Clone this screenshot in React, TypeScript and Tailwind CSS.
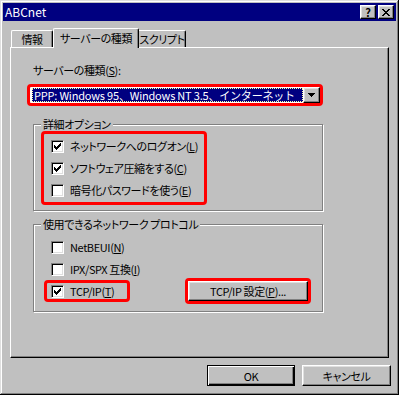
import React from "react";

const FONT = "font-['Noto_Sans_CJK_JP','Noto_Sans_CJK_SC',sans-serif] [font-feature-settings:'palt']";
const TXT = "text-[11px] leading-[14px] tracking-[-0.4px] text-black";

function CheckBox({ checked }: { checked?: boolean }) {
  // 7x7 win95 check glyph, one 3px-tall run per column
  const cols = [2, 3, 4, 3, 2, 1, 0];
  return (
    <span className="relative block w-[13px] h-[13px] shrink-0 bg-white border border-t-[#808080] border-l-[#808080] border-r-white border-b-white shadow-[inset_1px_1px_0_#000,inset_-1px_-1px_0_#dfdfdf]">
      {checked && (
        <svg className="absolute left-[2px] top-[2px]" width="7" height="7" shapeRendering="crispEdges">
          {cols.map((y, x) => (
            <rect key={x} x={x} y={y} width="1" height="3" fill="#000" />
          ))}
        </svg>
      )}
    </span>
  );
}

function Row({ checked, children }: { checked?: boolean; children: React.ReactNode }) {
  return (
    <div className="flex items-center h-[22px] gap-[6px]">
      <CheckBox checked={checked} />
      <span className={`${TXT} whitespace-nowrap`}>{children}</span>
    </div>
  );
}

const raised =
  "border border-t-white border-l-white border-r-black border-b-black shadow-[inset_-1px_-1px_0_#808080,inset_1px_1px_0_#dfdfdf]";

export default function App() {
  return (
    <div
      className={`${FONT} w-[399px] h-[395px] bg-[#c0c0c0] p-[3px] flex flex-col shadow-[inset_-1px_-1px_0_#000,inset_1px_1px_0_#dfdfdf,inset_-2px_-2px_0_#808080,inset_2px_2px_0_#fff]`}
    >
      {/* title bar */}
      <div className="h-[18px] bg-[#000080] flex items-center pl-[2px] pr-[2px]">
        <span className="text-white text-[12px] leading-[14px]">ABCnet</span>
        <div className="ml-auto flex gap-[2px]">
          <div className={`w-[16px] h-[14px] bg-[#c0c0c0] ${raised} flex items-center justify-center`}>
            <span className="text-[11px] leading-[11px] font-bold text-black">?</span>
          </div>
          <div className={`w-[16px] h-[14px] bg-[#c0c0c0] ${raised} flex items-center justify-center`}>
            <svg width="8" height="7" shapeRendering="crispEdges">
              <path d="M0 0h2v1H0zM6 0h2v1H6zM1 1h2v1H1zM5 1h2v1H5zM2 2h4v1H2zM3 3h2v1H3zM2 4h4v1H2zM1 5h2v1H1zM5 5h2v1H5zM0 6h2v1H0zM6 6h2v1H6z" fill="#000" />
            </svg>
          </div>
        </div>
      </div>

      <div className="px-[7px] flex flex-col">
        {/* tabs */}
        <div className={`mt-[7px] flex items-end h-[19px] ${TXT} whitespace-nowrap`}>
          <div className="ml-[1px] w-[42px] h-[17px] border-l border-t border-white rounded-tl-[2px] rounded-tr-[2px] border-r border-r-black shadow-[inset_-1px_0_0_#808080] flex items-center justify-center">
            情報
          </div>
          <div className="relative z-10 w-[86px] h-[20px] -mb-[1px] bg-[#c0c0c0] border-l border-t border-white rounded-tl-[2px] rounded-tr-[2px] border-r border-r-black shadow-[inset_-1px_0_0_#808080] flex items-center justify-center pb-[2px]">
            サーバーの種類
          </div>
          <div className="w-[47px] h-[17px] border-t border-white rounded-tr-[2px] border-r border-r-black shadow-[inset_-1px_0_0_#808080] flex items-center justify-center">
            スクリプト
          </div>
        </div>

        {/* panel */}
        <div className="h-[311px] border border-t-white border-l-white border-r-black border-b-black shadow-[inset_-1px_-1px_0_#808080] flex flex-col">
          <div className={`pl-[22px] pt-[15px] ${TXT}`}>
            サーバーの種類(<span className="underline">S</span>):
          </div>

          <div className="ml-[16px] mt-[7px] w-[296px] h-[22px] border-[3px] border-[#ff0000] rounded-[4px] flex bg-white">
            <div className="flex-1 ml-[2px] my-[1px] bg-[#000080] flex items-center pl-[2px] outline-1 outline-dotted outline-[#ffffa0] -outline-offset-1 text-[11px] leading-[14px] tracking-[-0.2px] [font-feature-settings:normal] text-white whitespace-nowrap overflow-hidden">
              PPP: Windows 95、Windows NT 3.5、インターネット
            </div>
            <div className={`w-[17px] bg-[#c0c0c0] ${raised} flex items-center justify-center`}>
              <svg width="7" height="4" shapeRendering="crispEdges">
                <path d="M0 0h7v1H0zM1 1h5v1H1zM2 2h3v1H2zM3 3h1v1H3z" fill="#000" />
              </svg>
            </div>
          </div>

          <fieldset className="ml-[22px] mt-[11px] w-[290px] border border-[#808080] shadow-[inset_1px_1px_0_#fff,1px_1px_0_#fff] pb-[5px]">
            <legend className={`ml-[7px] px-[2px] bg-[#c0c0c0] ${TXT}`}>詳細オプション</legend>
            <div className="ml-[7px] w-[166px] border-[3px] border-[#ff0000] rounded-[4px] pl-[7px] pt-[1px] pb-[1px]">
              <Row checked>
                ネットワークへのログオン(<span className="underline">L</span>)
              </Row>
              <Row checked>
                ソフトウェア圧縮をする(<span className="underline">C</span>)
              </Row>
              <Row>
                暗号化パスワードを使う(<span className="underline">E</span>)
              </Row>
            </div>
          </fieldset>

          <fieldset className="ml-[22px] mt-[6px] w-[290px] border border-[#808080] shadow-[inset_1px_1px_0_#fff,1px_1px_0_#fff] pt-[5px] pb-[7px]">
            <legend className={`ml-[7px] px-[2px] bg-[#c0c0c0] ${TXT}`}>使用できるネットワーク プロトコル</legend>
            <div className="pl-[17px]">
              <Row>
                NetBEUI(<span className="underline">N</span>)
              </Row>
              <Row>
                IPX/SPX 互換(<span className="underline">I</span>)
              </Row>
            </div>
            <div className="-mt-[2px] h-[26px] flex items-center">
              <div className="ml-[10px] w-[86px] h-[22px] border-[3px] border-[#ff0000] rounded-[4px] pl-[4px] flex items-center gap-[6px]">
                <CheckBox checked />
                <span className={`${TXT} whitespace-nowrap`}>
                  TCP/IP(<span className="underline">T</span>)
                </span>
              </div>
              <div className="ml-auto mr-[11px] w-[126px] h-[26px] border-[3px] border-[#ff0000] rounded-[4px]">
                <div className={`w-full h-full bg-[#c0c0c0] ${raised} flex items-center justify-center ${TXT}`}>
                  TCP/IP 設定(<span className="underline">P</span>)...
                </div>
              </div>
            </div>
          </fieldset>
        </div>

        {/* dialog buttons */}
        <div className={`mt-[7px] -mr-[2px] flex justify-end gap-[7px] ${TXT}`}>
          <div className="w-[88px] h-[21px] border border-black shadow-[inset_1px_1px_0_#fff,inset_-1px_-1px_0_#000,inset_-2px_-2px_0_#808080] flex items-center justify-center">
            OK
          </div>
          <div className={`w-[89px] h-[21px] ${raised} flex items-center justify-center`}>キャンセル</div>
        </div>
      </div>
    </div>
  );
}
